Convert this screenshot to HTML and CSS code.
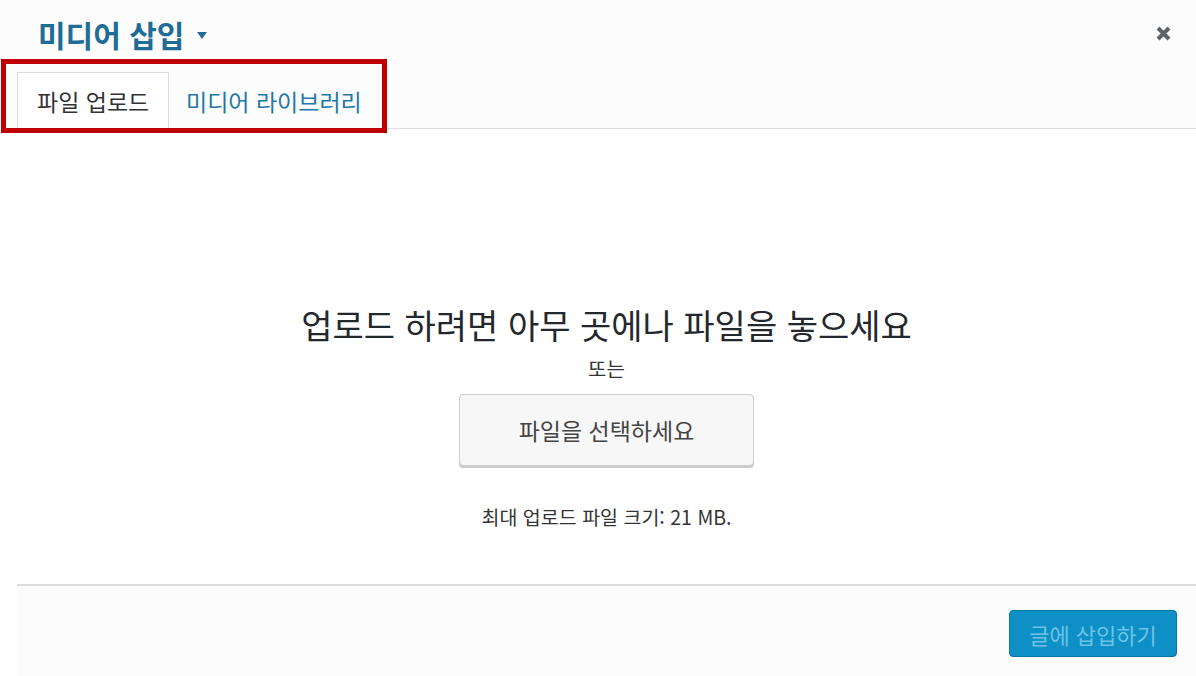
FILE: index.html
```html
<!DOCTYPE html>
<html lang="ko">
<head>
<meta charset="utf-8">
<link rel="stylesheet" href="styles.css">
</head>
<body>
<div class="modal">
  <header class="head">
    <div class="title-row">
      <h1 class="title">미디어 삽입 <span class="caret"></span></h1>
      <button class="close" aria-label="닫기">
        <svg width="17" height="17" viewBox="0 0 17 17"><path d="M3 3 L14 14 M14 3 L3 14" stroke="#5f6266" stroke-width="4" stroke-linecap="butt"/></svg>
      </button>
    </div>
    <nav class="tabs">
      <span class="tab active">파일 업로드</span>
      <span class="tab">미디어 라이브러리</span>
    </nav>
    <div class="highlight"></div>
  </header>
  <main class="content">
    <p class="instructions">업로드 하려면 아무 곳에나 파일을 놓으세요</p>
    <p class="or">또는</p>
    <button class="select">파일을 선택하세요</button>
    <p class="max">최대 업로드 파일 크기: 21 MB.</p>
  </main>
  <footer class="foot">
    <button class="insert">글에 삽입하기</button>
  </footer>
</div>
</body>
</html>
```
FILE: styles.css
```css
* { box-sizing: border-box; }
html, body { margin: 0; padding: 0; }
body {
  width: 1196px;
  height: 676px;
  overflow: hidden;
  background: #fff;
  font-family: "Noto Sans CJK KR", "Noto Sans", sans-serif;
}
.modal {
  display: flex;
  flex-direction: column;
  height: 676px;
}
.head {
  position: relative;
  background: #fcfcfc;
  height: 129px;
  display: flex;
  flex-direction: column;
}
.title-row {
  display: flex;
  justify-content: space-between;
  align-items: center;
  height: 72px;
  padding: 0 24px 0 38px;
}
.title {
  margin: 0;
  margin-top: -4px;
  font-size: 30px;
  font-weight: 700;
  color: #1f6d96;
  line-height: 1;
  display: flex;
  align-items: center;
  gap: 13px;
}
.caret {
  width: 0; height: 0;
  border-left: 5px solid transparent;
  border-right: 5px solid transparent;
  border-top: 7px solid #1f6d96;
  margin-top: 2px;
}
.close {
  border: 0;
  background: none;
  padding: 0;
  width: 17px;
  height: 17px;
  margin-top: -6px;
  display: flex;
}
.tabs {
  margin-left: 17px;
  height: 57px;
  border-bottom: 1px solid #dcdcdc;
  display: flex;
  align-items: stretch;
}
.tab {
  display: flex;
  align-items: center;
  padding: 0 16px;
  font-size: 23px;
  color: #1f78a8;
  margin-bottom: -1px;
  border: 1px solid transparent;
  border-bottom: 0;
}
.tab.active {
  background: #fff;
  color: #333;
  border-color: #dcdcdc;
  width: 152px;
  padding-left: 19px;
}
.highlight {
  position: absolute;
  left: 1px;
  top: 59px;
  width: 386px;
  height: 74px;
  border: 5px solid #c00000;
  pointer-events: none;
}
.content {
  flex: 1;
  display: flex;
  flex-direction: column;
  align-items: center;
  padding-top: 176px;
  padding-left: 17px;
}
.instructions {
  margin: 0;
  font-size: 34px;
  color: #23282d;
  line-height: 40px;
}
.or {
  margin: 12px 0 0;
  font-size: 20px;
  color: #333;
  line-height: 24px;
}
.select {
  margin-top: 13px;
  width: 295px;
  height: 72px;
  background: #f7f7f7;
  border: 1px solid #cccccc;
  border-radius: 4px;
  box-shadow: 0 2px 0 #cccccc;
  font-family: inherit;
  font-size: 23px;
  color: #444;
}
.max {
  margin: 39px 0 0;
  font-size: 19.5px;
  color: #333;
  line-height: 24px;
}
.foot {
  margin-left: 17px;
  height: 92px;
  background: #fcfcfc;
  border-top: 2px solid #dddddd;
  display: flex;
  justify-content: flex-end;
  align-items: flex-start;
  padding: 24px 19px 0 0;
}
.insert {
  width: 168px;
  height: 47px;
  background: #0e8fc6;
  border: 1px solid #0a74a4;
  border-radius: 4px;
  font-family: inherit;
  font-size: 22px;
  color: #6cc3e6;
}
```
